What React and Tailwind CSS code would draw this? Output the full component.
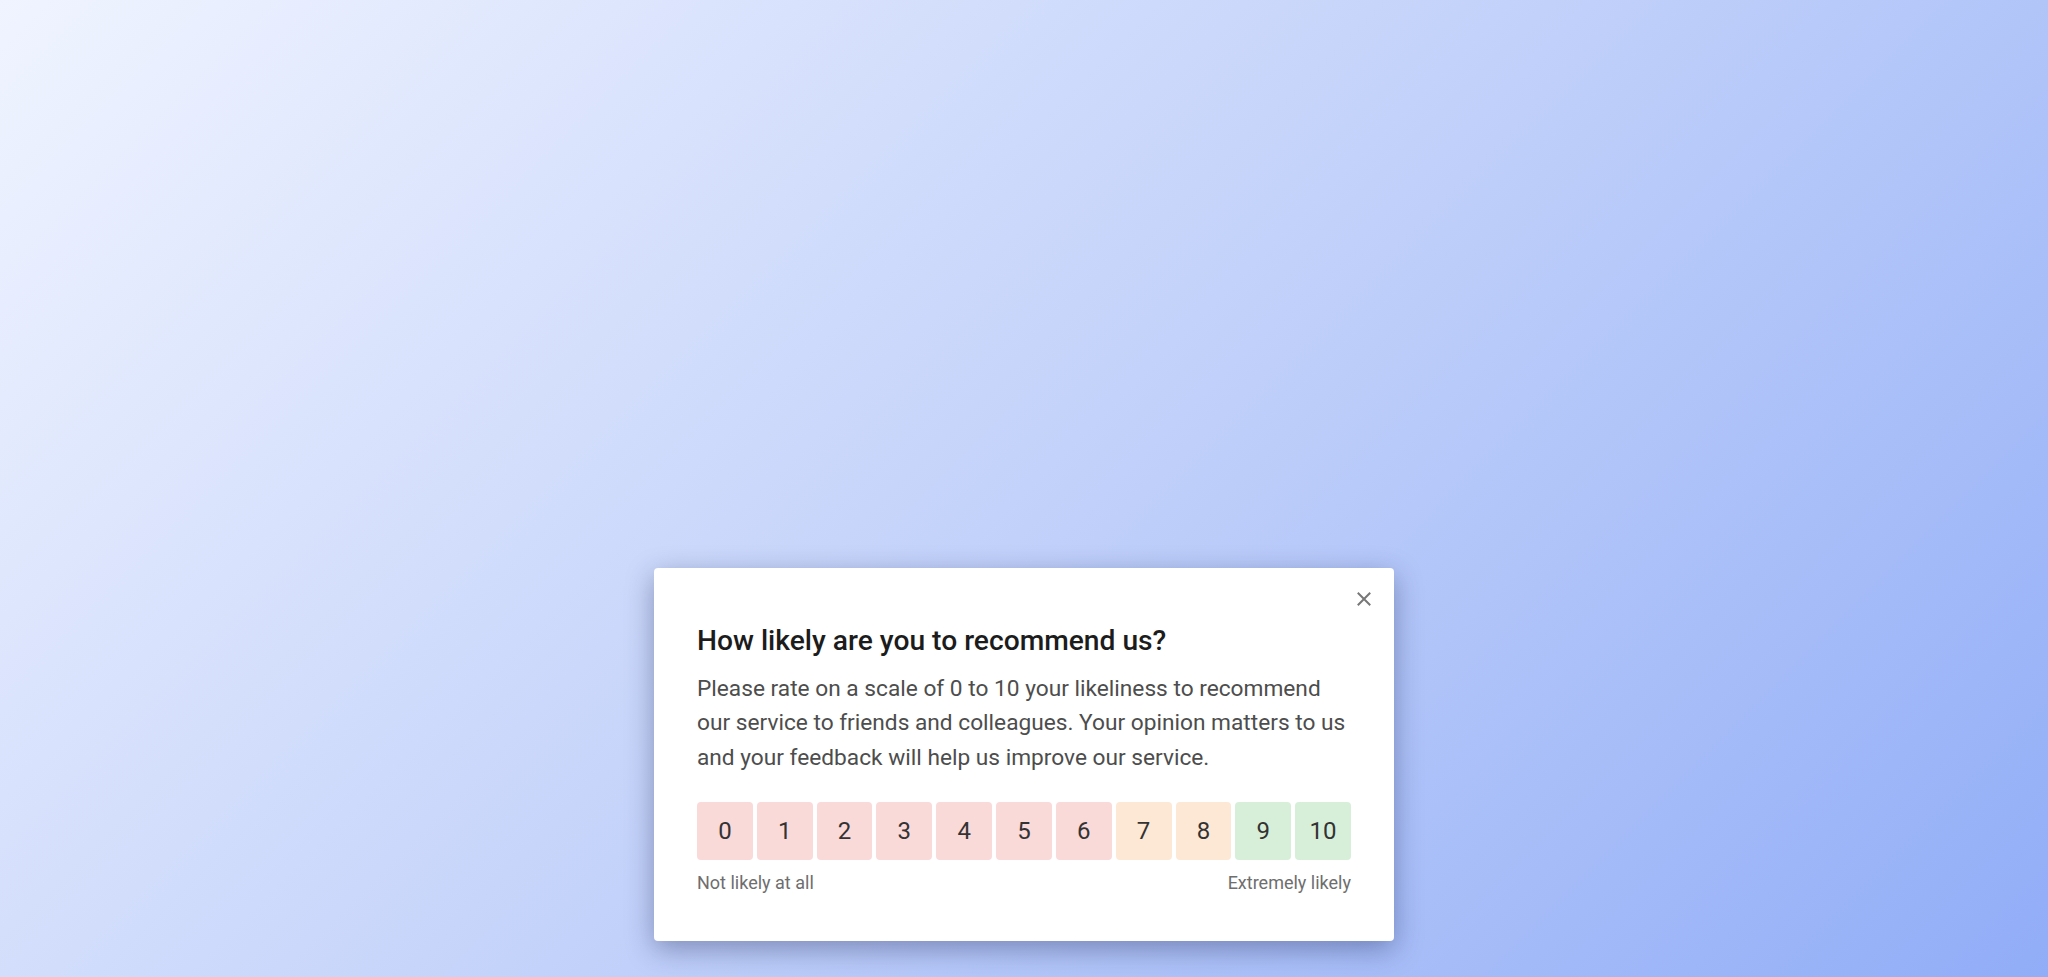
import React from 'react';

const scores = [0, 1, 2, 3, 4, 5, 6, 7, 8, 9, 10];

const tone = (n) => {
  if (n <= 6) return 'bg-[#fad9d9]';
  if (n <= 8) return 'bg-[#fde8d6]';
  return 'bg-[#d7efd8]';
};

const App = () => {
  return (
    <div className="h-screen w-full flex flex-col items-center justify-end pb-[36px] bg-[linear-gradient(135deg,#f0f4ff_0%,#c3d2fa_50%,#91adf7_100%)] font-['Roboto',sans-serif]">
      <div className="relative w-[740px] bg-white rounded-[4px] shadow-[0_8px_28px_rgba(20,30,80,0.38)] pt-[56px] pl-[43px] pr-[42px] pb-[46px]">
        <button className="absolute top-[24px] right-[23px] w-[14px] h-[14px] text-[#777]" aria-label="Close">
          <svg width="14" height="14" viewBox="0 0 14 14" fill="none" stroke="currentColor" strokeWidth="2" strokeLinecap="square">
            <path d="M1.5 1.5 L12.5 12.5 M12.5 1.5 L1.5 12.5" />
          </svg>
        </button>
        <h2 className="text-[28.2px] leading-[34px] font-medium text-[#1c1c1c]">How likely are you to recommend us?</h2>
        <p className="mt-[14px] text-[22.7px] leading-[34.5px] text-[#4d4d4d]">
          Please rate on a scale of 0 to 10 your likeliness to recommend our service to friends and colleagues. Your opinion matters to us and your feedback will help us improve our service.
        </p>
        <div className="mt-[27px] mr-[1px] flex gap-[4px]">
          {scores.map(n => (
            <button key={n} className={`flex-1 h-[58px] rounded-[4px] flex items-center justify-center text-[24px] text-[#333] ${tone(n)}`}>
              {n}
            </button>
          ))}
        </div>
        <div className="mt-[11px] mr-[1px] flex justify-between text-[18px] leading-[24px] text-[#6e6e6e]">
          <span>Not likely at all</span>
          <span>Extremely likely</span>
        </div>
      </div>
    </div>
  );
};

export default App;
